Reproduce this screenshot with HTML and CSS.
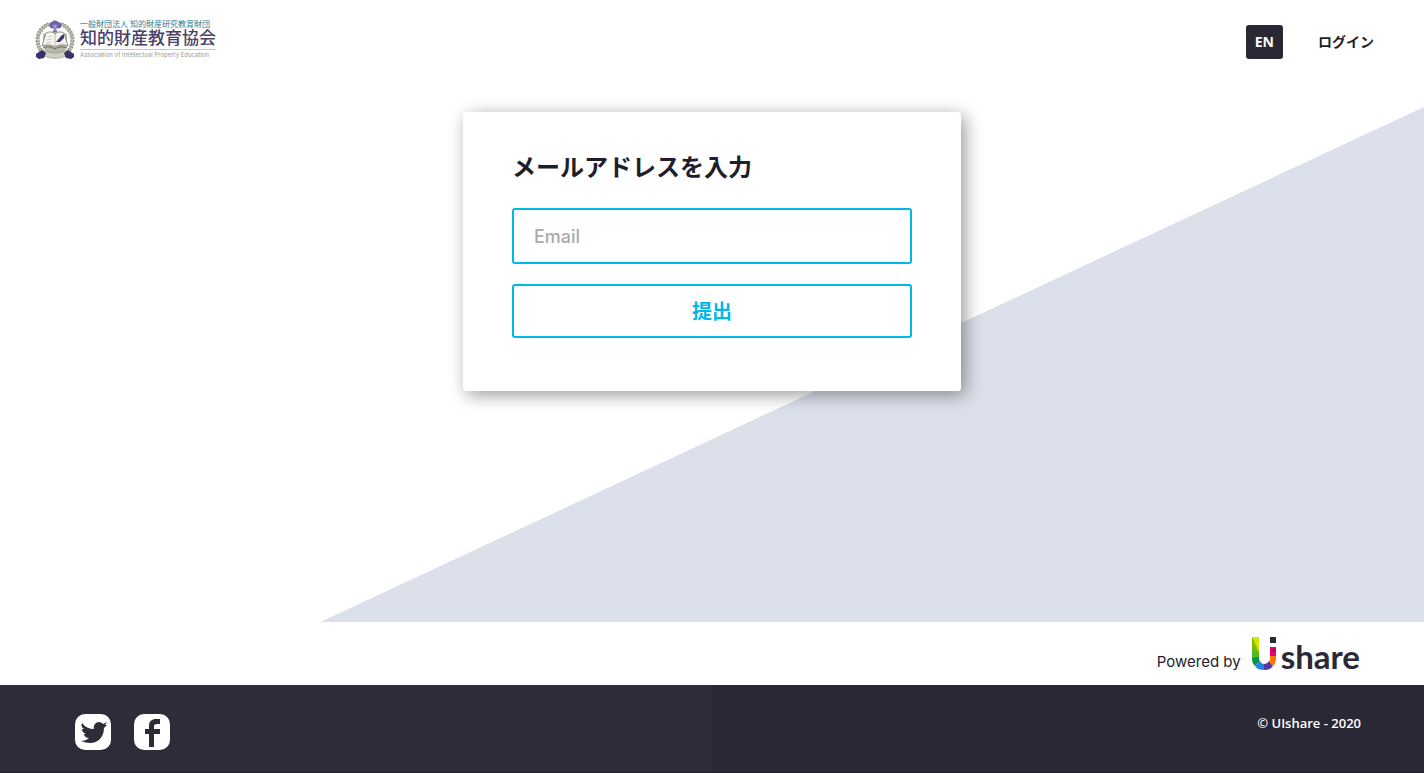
FILE: index.html
```html
<!DOCTYPE html>
<html lang="ja">
<head>
  <meta charset="UTF-8">
  <title>メールアドレスを入力 - UIshare</title>
  <meta name="viewport" content="width=device-width, initial-scale=1.0">
  <link rel="stylesheet" href="styles.css">
</head>
<body>
  <div class="hero">
    <header class="header">
      <a class="logo" href="#">
        <svg class="emblem" viewBox="0 0 40 40" aria-hidden="true">
          <!-- laurel -->
          <g fill="none" stroke="#85857c" stroke-width="4" stroke-dasharray="2 1">
            <path d="M14 4C0 10 0 25 8 33"/>
            <path d="M26 4c14 6 14 21 6 29"/>
          </g>
          <g fill="none" stroke="#b5b5a8" stroke-width="2">
            <path d="M14 4C0 10 0 25 8 33"/>
            <path d="M26 4c14 6 14 21 6 29"/>
          </g>
          <!-- shield and book -->
          <path d="M8 14l12-3 12 3v11c0 5-5 9-12 11C13 34 8 30 8 25z" fill="#b9b8ac"/>
          <path d="M11 13c4-2 7-1 9 1 2-2 5-3 9-1l4 13c-5-2-10-1-13 1-3-2-8-3-13-1z" fill="#f5f5ef" stroke="#77776c" stroke-width=".8"/>
          <path d="M20 14v12" fill="none" stroke="#a5a59a" stroke-width=".7"/>
          <path d="M8 28c5-2 9-1 12 1 3-2 7-3 12-1" fill="none" stroke="#66665c"/>
          <path d="M13 17l4-1M12 20l5-1M11 23l6-1M23 24l7 0" stroke="#c5c4b8" stroke-width=".8"/>
          <path d="M21 22l5-6 3-2 0 4-4 4z" fill="#413579"/>
          <!-- tree -->
          <path d="M15 7c-2-2 0-5 2-5 1-2 5-2 6 0 3 0 4 3 3 5 0 1-3 2-5 1l1 4h-4l1-4c-2 1-4 0-4-1z" fill="#6960ac"/>
          <path d="M20 11V4M20 7l-3-2M20 7l3-2" fill="none" stroke="#d5d1ed" stroke-width=".7"/>
          <!-- ribbon -->
          <path d="M8 30c8 4 16 4 24 0l-1 6c-7 3-15 3-22 0z" fill="#d0cfc0" stroke="#99988c" stroke-width=".7"/>
          <path d="M1 34l6-4 4 3-2 5-5 1-3-2z" fill="#39306e"/>
          <path d="M39 34l-6-4-4 3 2 5 5 1 3-2z" fill="#39306e"/>
        </svg>
        <span class="logo-text">
          <span class="logo-sub">一般財団法人 知的財産研究教育財団</span>
          <span class="logo-name">知的財産教育協会</span>
          <span class="logo-en">Association of Intellectual Property Education</span>
        </span>
      </a>
      <nav class="nav">
        <a class="lang" href="#">EN</a>
        <a class="login" href="#">ログイン</a>
      </nav>
    </header>
    <main class="content">
      <form class="card">
        <h1><label for="email">メールアドレスを入力</label></h1>
        <input class="field" type="email" id="email" placeholder="Email">
        <button class="submit" type="submit">提出</button>
      </form>
    </main>
  </div>
  <div class="powered">
    <span class="by">Powered by</span>
    <a class="uishare" href="#">
      <svg class="ui-mark" viewBox="0 0 26 34" aria-hidden="true">
        <path d="M1 0h7v17L1 13z" fill="#79be00"/>
        <path d="M1 0h7v15z" fill="#d6e500"/>
        <path d="M1 13l7 2v6H1z" fill="#4dbd22"/>
        <path d="M1 21l7-1c0 2 0 3 1 4l-5 5c-2-2-3-4-3-8z" fill="#079447"/>
        <path d="M9 24c1 2 2 3 4 3v6c-4 0-7-1-9-4z" fill="#2685e4"/>
        <path d="M13 27c2 0 4-1 5-3l4 5c-2 3-5 4-9 4z" fill="#5636a0"/>
        <path d="M18 24c1-1 1-2 1-5h6v2c0 4-1 6-3 8z" fill="#ff7900"/>
        <path d="M19 10h6v9h-6z" fill="#ed0077"/>
        <path d="M19 14l6-4v4l-6 1z" fill="#c20058"/>
        <path d="M19 0h6v6h-6z" fill="#2c2937"/>
      </svg>
      <span class="share">share</span>
    </a>
  </div>
  <footer class="footer">
    <div class="social">
      <a href="#" aria-label="Twitter">
        <svg viewBox="0 0 36 36">
          <rect width="36" height="36" rx="10" fill="#fff"/>
          <path d="M7 9c3 4 7 6 12 6-1-4 2-7 5-7 2 0 3 1 4 2l4-2-2 3 2 0-3 3c0 9-6 15-14 15-3 0-6-1-9-2 3 0 6-1 8-3-3 0-5-2-5-4h2c-3-1-4-3-4-5l2 0c-3-2-3-4-2-6z" fill="#2f2c39"/>
        </svg>
      </a>
      <a href="#" aria-label="Facebook">
        <svg viewBox="0 0 36 36">
          <rect width="36" height="36" rx="10" fill="#fff"/>
          <path d="M15 33V20h-4v-5h4v-3c0-5 3-7 7-7h4v5h-3c-2 0-3 1-3 2v3h6v5h-6v13z" fill="#2f2c39"/>
        </svg>
      </a>
    </div>
    <p class="copyright">© UIshare - 2020</p>
  </footer>
</body>
</html>
```

FILE: styles.css
```css
* {
  box-sizing: border-box;
}
body {
  margin: 0;
  min-height: 100vh;
  display: flex;
  flex-direction: column;
  font-family: Inter, "Noto Sans CJK JP", sans-serif;
  color: #201e2d;
  background: #fff;
}
a {
  color: inherit;
  text-decoration: none;
}
svg {
  display: block;
}
.hero {
  position: relative;
  flex: 1;
}
.hero::before {
  content: "";
  position: absolute;
  z-index: -1;
  right: 0;
  bottom: 0;
  width: 77.5%;
  height: 82.8%;
  background: #dce0eb;
  clip-path: polygon(0 100%, 100% 0, 100% 100%);
}
.header {
  display: flex;
  justify-content: space-between;
  align-items: center;
  height: 84px;
  padding: 0 50px 0 35px;
}
.logo {
  display: flex;
  align-items: center;
  gap: 5px;
  padding-bottom: 4px;
}
.emblem {
  width: 40px;
  height: 40px;
}
.logo-text {
  display: flex;
  flex-direction: column;
  font-family: "Liberation Serif", "Noto Sans CJK JP", serif;
  white-space: nowrap;
}
.logo-sub {
  font-size: 8px;
  line-height: 9px;
  color: #24829c;
}
.logo-name {
  font-size: 17px;
  line-height: 20px;
  font-weight: 500;
  color: #4a4069;
  border-bottom: 1px solid #c5c2d4;
}
.logo-en {
  font-family: Inter, sans-serif;
  font-size: 6px;
  line-height: 10px;
  color: #999;
}
.nav {
  display: flex;
  align-items: center;
  gap: 35px;
  font-size: 14px;
  font-weight: 700;
}
.lang {
  padding: 0 9px;
  border-radius: 3px;
  font-family: "Noto Sans", sans-serif;
  line-height: 34px;
  color: #fff;
  background: #2b2836;
}
.login {
  padding-bottom: 2px;
}
.content {
  padding: 28px 16px 48px;
}
.card {
  display: flex;
  flex-direction: column;
  width: 100%;
  max-width: 498px;
  margin: 0 auto;
  padding: 38px 49px 53px;
  border-radius: 3px;
  background: #fff;
  box-shadow: 4px 4px 18px rgba(0,0,0,0.4);
}
h1 {
  margin: 0 0 22px;
  font-size: 24px;
  line-height: 36px;
  font-weight: 700;
}
.field,
.submit {
  width: 100%;
  border: 2px solid #00b7e8;
  border-radius: 3px;
  background: #fff;
  font-family: inherit;
}
.field {
  height: 56px;
  margin-bottom: 20px;
  padding: 0 20px;
  font-size: 18px;
  font-weight: 500;
}
.field::placeholder {
  color: #aaa;
}
.submit {
  height: 54px;
  padding: 0 0 2px;
  font-size: 20px;
  font-weight: 700;
  color: #00b7e8;
  cursor: pointer;
}
.powered {
  display: flex;
  justify-content: flex-end;
  align-items: flex-end;
  gap: 10px;
  height: 63px;
  padding: 0 64px 14px 0;
}
.by {
  font-size: 15px;
  line-height: 18px;
}
.uishare {
  display: flex;
  align-items: flex-end;
  gap: 4px;
}
.ui-mark {
  width: 26px;
  height: 34px;
}
.share {
  font-family: Lato, sans-serif;
  font-size: 33px;
  line-height: 30px;
  font-weight: 700;
  color: #2c2937;
}
.footer {
  display: flex;
  justify-content: space-between;
  align-items: flex-start;
  height: 88px;
  padding: 29px 63px 0 75px;
  color: #fff;
  background: linear-gradient(90deg, #2f2c39 50%, #2b2836 50%);
  border-bottom: 1px solid #201e2d;
}
.social {
  display: flex;
  gap: 23px;
}
.social svg {
  width: 36px;
  height: 36px;
}
.copyright {
  margin: 0;
  font-family: "Open Sans", sans-serif;
  font-size: 13px;
  line-height: 18px;
  font-weight: 600;
}
```
